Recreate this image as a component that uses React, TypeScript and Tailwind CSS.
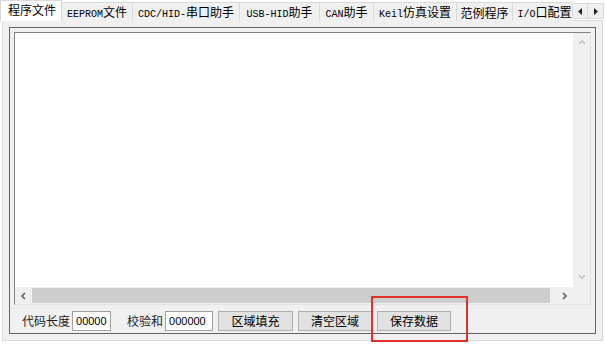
import React from 'react';

const tabs = [
  { label: '程序文件', w: 'w-[62px]' },
  { label: 'EEPROM文件', w: 'w-[71px]' },
  { label: 'CDC/HID-串口助手', w: 'w-[107px]' },
  { label: 'USB-HID助手', w: 'w-[80px]' },
  { label: 'CAN助手', w: 'w-[54px]' },
  { label: 'Keil仿真设置', w: 'w-[83px]' },
  { label: '范例程序', w: 'w-[56px]' },
  { label: 'I/O口配置', w: 'w-[64px]' },
];

// latin bits look like a small fixed font, CJK a bit bigger
function TabLabel({ text }: { text: string }) {
  const parts = text.split(/([\x20-\x7e]+)/).filter(Boolean);
  return (
    <span className="whitespace-nowrap">
      {parts.map((p, i) =>
        /^[\x20-\x7e]+$/.test(p) ? (
          <span key={i} className="text-[10px] font-['Liberation_Mono',monospace]">{p}</span>
        ) : (
          <span key={i} className="text-[12px]">{p}</span>
        )
      )}
    </span>
  );
}

function Arrow({ dir }: { dir: 'up' | 'down' | 'left' | 'right' }) {
  const d = {
    up: 'M1 5 L4 2 L7 5',
    down: 'M1 2 L4 5 L7 2',
    left: 'M5 1 L2 4 L5 7',
    right: 'M2 1 L5 4 L2 7',
  }[dir];
  const dim = dir === 'up' || dir === 'down';
  return (
    <svg width="8" height="8" viewBox="0 0 8 8">
      <path d={d} fill="none" stroke={dim ? '#c2c2c2' : '#606060'} strokeWidth="1.6" />
    </svg>
  );
}

export default function App() {
  return (
    <div className="relative w-[605px] h-[346px] bg-white font-['Noto_Sans_CJK_SC','Liberation_Sans',sans-serif] text-black overflow-hidden">
      {/* tab strip */}
      <div className="flex items-end h-[21px] relative">
        <div className="flex items-end overflow-hidden w-[572px]">
          {tabs.map((t, i) =>
            i === 0 ? (
              <div
                key={t.label}
                className={`${t.w} shrink-0 h-[21px] bg-white border-l border-t border-r border-[#d9d9d9] flex items-start pl-[7px] pt-[1px] leading-[16px] z-10`}
              >
                <span className="text-[12px]">{t.label}</span>
              </div>
            ) : (
              <div
                key={t.label}
                className={`${t.w} shrink-0 h-[19px] bg-[#f0f0f0] border-t border-r border-[#d9d9d9] flex items-center justify-center leading-[16px]`}
              >
                <TabLabel text={t.label} />
              </div>
            )
          )}
        </div>
        <div className="absolute right-[1px] top-[3px] flex">
          <div className="w-[16px] h-[16px] bg-[#f0f0f0] border border-[#d9d9d9] flex items-center justify-center">
            <svg width="4" height="7" viewBox="0 0 4 7"><path d="M4 0 L0 3.5 L4 7 Z" fill="#222" /></svg>
          </div>
          <div className="w-[16px] h-[16px] bg-[#f0f0f0] border border-l-0 border-[#d9d9d9] flex items-center justify-center">
            <svg width="4" height="7" viewBox="0 0 4 7"><path d="M0 0 L4 3.5 L0 7 Z" fill="#222" /></svg>
          </div>
        </div>
      </div>

      {/* tab page */}
      <div className="mx-[2px] -mt-px h-[321px] bg-[#f0f0f0] border border-[#d9d9d9] px-[6px] pt-[6px]">
        <div className="h-[307px] border border-[#646464] bg-[#f0f0f0] flex flex-col">
          <div className="m-[4px] mb-0 h-[273px] border border-[#828282] border-r-[#e3e3e3] border-b-[#e3e3e3] bg-white flex flex-col">
            <div className="flex flex-1">
              <div className="flex-1 bg-white" />
              <div className="w-[17px] bg-[#f0f0f0] flex flex-col items-center justify-between py-[6px]">
                <Arrow dir="up" />
                <Arrow dir="down" />
              </div>
            </div>
            <div className="flex h-[17px]">
              <div className="flex-1 bg-[#f0f0f0] flex items-center">
                <div className="w-[17px] flex justify-center">
                  <Arrow dir="left" />
                </div>
                <div className="flex-1 h-[15px] bg-[#cdcdcd]" />
                <div className="w-[17px] ml-[6px] flex justify-center">
                  <Arrow dir="right" />
                </div>
              </div>
              <div className="w-[17px] bg-[#f0f0f0]" />
            </div>
          </div>

          {/* bottom controls */}
          <div className="flex items-center h-[20px] mt-[6px] pl-[12px] text-[12px] leading-none">
            <span className="text-[#222]">代码长度</span>
            <div className="ml-[2px] w-[39px] h-[20px] bg-white border border-[#a0a0a0] flex items-center pl-[3px] text-[11px] font-['Liberation_Sans',sans-serif]">
              00000
            </div>
            <span className="ml-[16px] text-[#222]">校验和</span>
            <div className="ml-[2px] w-[48px] h-[20px] bg-white border border-[#a0a0a0] flex items-center pl-[3px] text-[11px] font-['Liberation_Sans',sans-serif]">
              000000
            </div>
            <button className="ml-[5px] w-[75px] h-[20px] bg-[#e1e1e1] border border-[#adadad] flex items-center justify-center text-[12px]">
              区域填充
            </button>
            <button className="ml-[5px] w-[74px] h-[20px] bg-[#e1e1e1] border border-[#adadad] flex items-center justify-center text-[12px]">
              清空区域
            </button>
            <button className="ml-[5px] w-[74px] h-[20px] bg-[#e1e1e1] border border-[#adadad] flex items-center justify-center text-[12px]">
              保存数据
            </button>
          </div>
        </div>
      </div>

      {/* red highlight box */}
      <div className="absolute left-[371px] top-[296px] w-[97px] h-[46px] border-2 border-[#e1302a]" />
    </div>
  );
}
